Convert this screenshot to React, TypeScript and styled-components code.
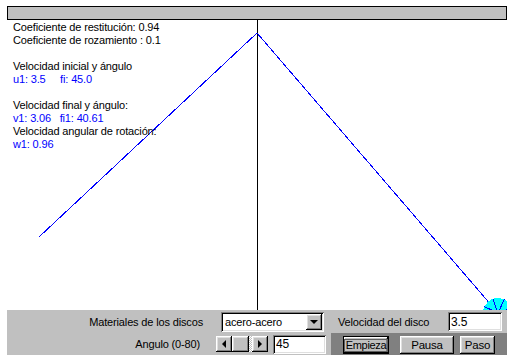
import React from "react";
import styled, { createGlobalStyle, css } from "styled-components";

const GlobalStyle = createGlobalStyle`
  body {
    margin: 0;
    background: #fff;
    font-family: "Liberation Sans", Arial, sans-serif;
  }
`;

const raised = css`
  background: #c0c0c0;
  box-shadow: inset -1px -1px #000, inset 1px 1px #fff, inset -2px -2px #808080,
    inset 2px 2px #dfdfdf;
`;

const sunken = css`
  background: #fff;
  box-shadow: inset 1px 1px #808080, inset -1px -1px #fff, inset 2px 2px #000,
    inset -2px -2px #dfdfdf;
`;

const Page = styled.div`
  padding: 6px 0 0 7px;
`;

const Applet = styled.div`
  width: 500px;
  display: flex;
  flex-direction: column;
  font-size: 11px;
  letter-spacing: -0.15px;
  color: #000;
`;

const TitleBar = styled.div`
  height: 14px;
  box-sizing: border-box;
  border: 1px solid #000;
  background: #c0c0c0;
`;

const Canvas = styled.div`
  position: relative;
  height: 290px;
  overflow: hidden;
  background: #fff;
`;

const Drawing = styled.svg`
  position: absolute;
  left: 0;
  top: 0;
`;

const Readout = styled.div`
  position: relative;
  padding: 1px 0 0 6px;
  line-height: 13px;
`;

const Line = styled.div<{ $blue?: boolean; $gap?: boolean }>`
  color: ${(p) => (p.$blue ? "#0000ff" : "#000")};
  margin-top: ${(p) => (p.$gap ? "13px" : "0")};
  white-space: pre;
`;

const Controls = styled.div`
  height: 45px;
  background: #c0c0c0;
  display: flex;
  flex-direction: column;
`;

const Row = styled.div<{ $h: number }>`
  height: ${(p) => p.$h}px;
  display: flex;
  align-items: center;
`;

const Label = styled.span<{ $w: number; $left?: boolean }>`
  flex: none;
  width: ${(p) => p.$w}px;
  text-align: ${(p) => (p.$left ? "left" : "right")};
`;

const SelectBox = styled.div`
  ${sunken};
  flex: none;
  width: 103px;
  height: 20px;
  box-sizing: border-box;
  padding: 2px;
  display: flex;
  align-items: center;
`;

const SelectText = styled.span`
  flex: 1;
  padding-left: 2px;
`;

const ArrowButton = styled.div<{ $w?: number }>`
  ${raised};
  flex: none;
  width: ${(p) => p.$w ?? 16}px;
  height: 16px;
  display: flex;
  align-items: center;
  justify-content: center;
`;

const Tri = styled.span<{ $dir: "down" | "left" | "right" }>`
  width: 0;
  height: 0;
  ${(p) =>
    p.$dir === "down"
      ? css`
          border-left: 4px solid transparent;
          border-right: 4px solid transparent;
          border-top: 4px solid #000;
          margin-top: 1px;
        `
      : p.$dir === "left"
      ? css`
          border-top: 4px solid transparent;
          border-bottom: 4px solid transparent;
          border-right: 4px solid #000;
        `
      : css`
          border-top: 4px solid transparent;
          border-bottom: 4px solid transparent;
          border-left: 4px solid #000;
        `}
`;

const Field = styled.div<{ $w: number }>`
  ${sunken};
  flex: none;
  width: ${(p) => p.$w}px;
  height: 19px;
  box-sizing: border-box;
  padding: 0 3px;
  display: flex;
  align-items: center;
  font-size: 12px;
`;

const Scrollbar = styled.div`
  flex: none;
  width: 52px;
  height: 16px;
  display: flex;
  background: repeating-conic-gradient(#c0c0c0 0 25%, #fff 0 50%) 0 0 / 2px 2px;
`;

const Thumb = styled.div`
  ${raised};
  width: 17px;
  height: 16px;
`;

const Track = styled.div`
  flex: 1;
`;

const ButtonBar = styled.div`
  flex: 1;
  align-self: stretch;
  background: #808080;
  display: flex;
  align-items: flex-start;
  padding: 3px 0 0 12px;
  box-sizing: border-box;
`;

const Button = styled.button<{ $w: number; $default?: boolean }>`
  ${raised};
  flex: none;
  width: ${(p) => p.$w}px;
  height: 18px;
  padding: 0;
  border: none;
  font: inherit;
  font-size: 11.5px;
  letter-spacing: -0.2px;
  color: #000;
  display: flex;
  align-items: center;
  justify-content: center;
  ${(p) =>
    p.$default &&
    css`
      box-shadow: inset 0 0 0 1px #000, inset -2px -2px #000, inset 2px 2px #fff,
        inset -3px -3px #808080;
    `}
`;

const Focus = styled.span`
  border: 1px solid #606060;
  padding: 0 1px;
  line-height: 11px;
  font-size: 11px;
  letter-spacing: -0.35px;
`;

const cx = 491;
const cy = 293;
const r = 15;

function Disc() {
  const spokes = Array.from({ length: 8 }, (_, i) => (i * Math.PI) / 4 + 0.35);
  return (
    <g>
      <circle cx={cx} cy={cy} r={r} fill="#00ffff" />
      {spokes.map((a, i) => (
        <line
          key={i}
          x1={cx}
          y1={cy}
          x2={cx + r * Math.cos(a)}
          y2={cy - r * Math.sin(a)}
          stroke="#0000ff"
          strokeWidth={1}
        />
      ))}
    </g>
  );
}

export default function App() {
  return (
    <Page>
      <GlobalStyle />
      <Applet>
        <TitleBar />
        <Canvas>
          <Drawing width={500} height={290} shapeRendering="crispEdges">
            <line x1={250.5} y1={0} x2={250.5} y2={290} stroke="#000" />
            <line x1={32} y1={217} x2={250} y2={13} stroke="#0000ff" />
            <line x1={250} y1={13} x2={cx} y2={cy} stroke="#0000ff" />
            <Disc />
          </Drawing>
          <Readout>
            <Line>Coeficiente de restitución: 0.94</Line>
            <Line>Coeficiente de rozamiento : 0.1</Line>
            <Line $gap>Velocidad inicial y ángulo</Line>
            <Line $blue>{"u1: 3.5     fi: 45.0"}</Line>
            <Line $gap>Velocidad final y ángulo:</Line>
            <Line $blue>{"v1: 3.06   fi1: 40.61"}</Line>
            <Line>Velocidad angular de rotación:</Line>
            <Line $blue>w1: 0.96</Line>
          </Readout>
        </Canvas>
        <Controls>
          <Row $h={23}>
            <Label $w={196}>Materiales de los discos</Label>
            <SelectBox style={{ marginLeft: 18 }}>
              <SelectText>acero-acero</SelectText>
              <ArrowButton>
                <Tri $dir="down" />
              </ArrowButton>
            </SelectBox>
            <Label $w={93} $left style={{ marginLeft: 14 }}>
              Velocidad del disco
            </Label>
            <Field $w={54} style={{ marginLeft: 17 }}>
              3.5
            </Field>
          </Row>
          <Row $h={22}>
            <Label $w={193}>Angulo (0-80)</Label>
            <Scrollbar style={{ marginLeft: 16 }}>
              <ArrowButton>
                <Tri $dir="left" />
              </ArrowButton>
              <Thumb />
              <Track />
              <ArrowButton>
                <Tri $dir="right" />
              </ArrowButton>
            </Scrollbar>
            <Field $w={53} style={{ marginLeft: 5 }}>
              45
            </Field>
            <ButtonBar style={{ marginLeft: 5 }}>
              <Button $w={46} $default>
                <Focus>Empieza</Focus>
              </Button>
              <Button $w={54} style={{ marginLeft: 11 }}>
                Pausa
              </Button>
              <Button $w={35} style={{ marginLeft: 6 }}>
                Paso
              </Button>
            </ButtonBar>
          </Row>
        </Controls>
      </Applet>
    </Page>
  );
}
